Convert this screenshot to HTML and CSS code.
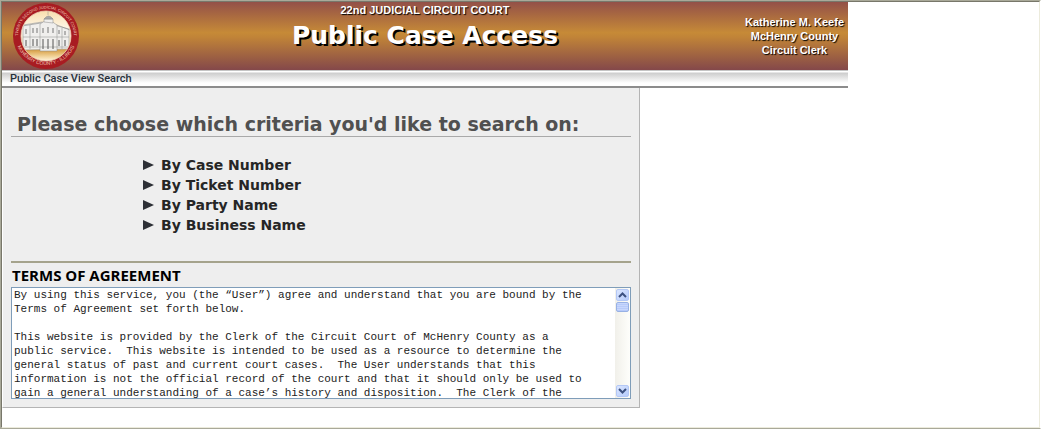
FILE: index.html
```
<!DOCTYPE html>
<html lang="en">
<head>
    <meta charset="UTF-8">
    <meta name="viewport" content="width=device-width, initial-scale=1.0">
    <title>Public Case Access</title>
    <link rel="stylesheet" href="styles.css">
</head>
<body>
    <header class="banner">
        <svg class="seal" viewBox="0 0 68 68" role="img" aria-label="Seal of the Circuit Court">
            <defs>
                <linearGradient id="sky" x1="0" y1="0" x2="0" y2="1">
                    <stop offset="0" stop-color="#f8dfae"/>
                    <stop offset="0.4" stop-color="#fffaf0"/>
                    <stop offset="0.7" stop-color="#f6deaf"/>
                    <stop offset="0.78" stop-color="#d79f45"/>
                    <stop offset="0.9" stop-color="#f0d095"/>
                    <stop offset="1" stop-color="#fff4dc"/>
                </linearGradient>
                <clipPath id="inner"><circle cx="34" cy="34" r="25"/></clipPath>
                <path id="arcTop" d="M8 45 A28 28 0 1 1 60 45"/>
                <path id="arcBottom" d="M5 43 A31 31 0 0 0 63 43"/>
            </defs>
            <circle cx="34" cy="34" r="33" fill="#a81c22"/>
            <circle cx="34" cy="34" r="25" fill="url(#sky)"/>
            <g clip-path="url(#inner)" fill="#f0efed" stroke="#8a8a8a" stroke-width="0.5">
                <path d="M11 23 L30 20 L57 27 L57 47 L11 48 Z"/>
                <path d="M10 24 L29 21 L45 23 L58 28" fill="none" stroke="#777"/>
                <path d="M28 22 L36 17 L45 23 V49 H28 Z"/>
                <path d="M32 20 V17 H41 V21 Z"/>
                <path d="M32 17 Q36.5 11 41 17 Z" fill="#a8a8a8"/>
                <path d="M36 13 V8 M36 9 H39"/>
                <path d="M11 35 H57 M11 45 H57 M18 23 V47 M50 26 V47"/>
                <path d="M14 27 V32 M21 26 V31 M25 26 V31 M31 26 V31 M36 25 V31 M41 26 V31 M47 28 V32 M53 29 V33" stroke="#777" stroke-width="1"/>
                <path d="M14 38 V44 M21 37 V44 M25 37 V44 M31 37 V47 M36 37 V47 M41 37 V47 M47 38 V44 M53 38 V44" stroke="#555" stroke-width="1"/>
            </g>
            <circle cx="34" cy="34" r="25" fill="none" stroke="#f0d4b8" stroke-width="0.8"/>
            <text class="seal-text"><textPath href="#arcTop" startOffset="50%">TWENTY-SECOND JUDICIAL CIRCUIT COURT</textPath></text>
            <text class="seal-text seal-county"><textPath href="#arcBottom" startOffset="50%">McHENRY COUNTY - ILLINOIS</textPath></text>
        </svg>
        <div class="banner-title">
            <p class="court">22nd JUDICIAL CIRCUIT COURT</p>
            <h1>Public Case Access</h1>
        </div>
        <p class="clerk">Katherine M. Keefe<br>McHenry County<br>Circuit Clerk</p>
    </header>
    <div class="breadcrumb">Public Case View Search</div>
    <main class="panel">
        <h2>Please choose which criteria you'd like to search on:</h2>
        <ul class="criteria">
            <li><a href="#case"><svg viewBox="0 0 11 10"><path d="M0 0 L11 5 L0 10 Z"/></svg>By Case Number</a></li>
            <li><a href="#ticket"><svg viewBox="0 0 11 10"><path d="M0 0 L11 5 L0 10 Z"/></svg>By Ticket Number</a></li>
            <li><a href="#party"><svg viewBox="0 0 11 10"><path d="M0 0 L11 5 L0 10 Z"/></svg>By Party Name</a></li>
            <li><a href="#business"><svg viewBox="0 0 11 10"><path d="M0 0 L11 5 L0 10 Z"/></svg>By Business Name</a></li>
        </ul>
        <section class="terms">
            <label for="terms">TERMS OF AGREEMENT</label>
            <div class="terms-box">
                <textarea id="terms" readonly>By using this service, you (the “User”) agree and understand that you are bound by the
Terms of Agreement set forth below.

This website is provided by the Clerk of the Circuit Court of McHenry County as a
public service.  This website is intended to be used as a resource to determine the
general status of past and current court cases.  The User understands that this
information is not the official record of the court and that it should only be used to
gain a general understanding of a case’s history and disposition.  The Clerk of the</textarea>
                <div class="scrollbar">
                    <button type="button" aria-label="Scroll up"><svg viewBox="0 0 9 6"><path d="M1 5 L4.5 1.5 L8 5"/></svg></button>
                    <span class="thumb"></span>
                    <button type="button" class="down" aria-label="Scroll down"><svg viewBox="0 0 9 6"><path d="M1 1 L4.5 4.5 L8 1"/></svg></button>
                </div>
            </div>
        </section>
    </main>
</body>
</html>
```
FILE: styles.css
```
* {
    box-sizing: border-box;
}

html {
    border: 1px solid #a9a999;
    border-right-color: #fff;
    background-color: #fff;
}

body {
    margin: 0;
    min-height: calc(100vh - 2px);
    border: 1px solid #78776a;
    border-right-color: #ecebdc;
    border-bottom-color: #ecebdc;
    font-family: "Liberation Sans", Arial, sans-serif;
}

h1,
h2,
p,
ul {
    margin: 0;
    padding: 0;
}

.banner {
    display: grid;
    grid-template-columns: 1fr auto 1fr;
    max-width: 846px;
    height: 68px;
    background: linear-gradient(#935048, #c68a37 45%, #c08338 52%, #84484a);
    color: #fff;
    font-weight: bold;
    font-size: 11px;
    text-shadow: 1px 1px 1px #000;
}

.seal {
    width: 68px;
    height: 68px;
    margin-left: 10px;
}

.seal-text {
    fill: #f0c8b4;
    font-size: 4px;
    font-weight: normal;
    text-anchor: middle;
    text-shadow: none;
}

.seal-county {
    font-size: 5px;
}

.banner-title {
    text-align: center;
}

.court {
    line-height: 16px;
}

h1 {
    font-family: "DejaVu Sans", Verdana, sans-serif;
    font-size: 25px;
    line-height: 36px;
    text-shadow: 2px 2px 0 #000;
}

.clerk {
    justify-self: end;
    padding: 13px 4px 0 0;
    line-height: 14px;
    text-align: center;
}

.breadcrumb {
    max-width: 846px;
    height: 18px;
    padding-left: 8px;
    border-top: 1px solid #c4c4c4;
    border-bottom: 2px solid #8c8c8c;
    background: linear-gradient(#fff 1px, #cdcdcd 2px, #fff 12px);
    color: #26303a;
    font-family: Roboto, Arial, sans-serif;
    font-size: 11px;
    font-weight: 500;
    line-height: 16px;
}

.panel {
    max-width: 638px;
    padding: 24px 8px 8px;
    border: 1px solid #b4b4b4;
    border-top: none;
    border-left-color: #fff;
    background-color: #eee;
}

h2 {
    padding-left: 6px;
    border-bottom: 1px solid #a9a9a9;
    color: #505050;
    font-family: "DejaVu Sans", Verdana, sans-serif;
    font-size: 19px;
    line-height: 24px;
}

.criteria {
    padding: 18px 0 26px 132px;
    list-style: none;
}

.criteria a {
    display: flex;
    align-items: center;
    gap: 7px;
    width: fit-content;
    color: #262626;
    font-family: "DejaVu Sans", Verdana, sans-serif;
    font-size: 14px;
    font-weight: bold;
    line-height: 20px;
    text-decoration: none;
}

.criteria svg {
    width: 11px;
    height: 10px;
    fill: #2d3036;
}

.terms {
    border-top: 2px solid #a5a38c;
}

.terms label {
    display: block;
    padding-left: 1px;
    font-family: "Open Sans", Tahoma, sans-serif;
    font-size: 15px;
    font-weight: bold;
    line-height: 24px;
}

.terms-box {
    display: flex;
    height: 112px;
    border: 1px solid #7f9db9;
    background-color: #fff;
}

textarea {
    flex: 1;
    min-width: 0;
    padding: 0 0 0 2px;
    border: none;
    outline: none;
    overflow: hidden;
    resize: none;
    background: none;
    color: #222;
    font-family: "Liberation Mono", "Courier New", monospace;
    font-size: 11px;
    line-height: 14px;
}

.scrollbar {
    display: flex;
    flex-direction: column;
    gap: 1px;
    width: 15px;
    padding: 1px;
    background: linear-gradient(to right, #f1f0ea, #fefefb);
}

.scrollbar button,
.thumb {
    display: grid;
    place-items: center;
    height: 12px;
    padding: 0;
    border: 1px solid #b4c8f6;
    border-radius: 2px;
    background: linear-gradient(135deg, #dbe6ff, #b5cbfb);
}

.scrollbar .thumb {
    height: 10px;
    border-color: #98b1e4;
    background: repeating-linear-gradient(#c8d7fc 0 1px, #b7cafa 1px 2px);
}

.scrollbar .down {
    margin-top: auto;
}

.scrollbar svg {
    width: 9px;
    height: 6px;
    fill: none;
    stroke: #3c5180;
    stroke-width: 2;
}
```
